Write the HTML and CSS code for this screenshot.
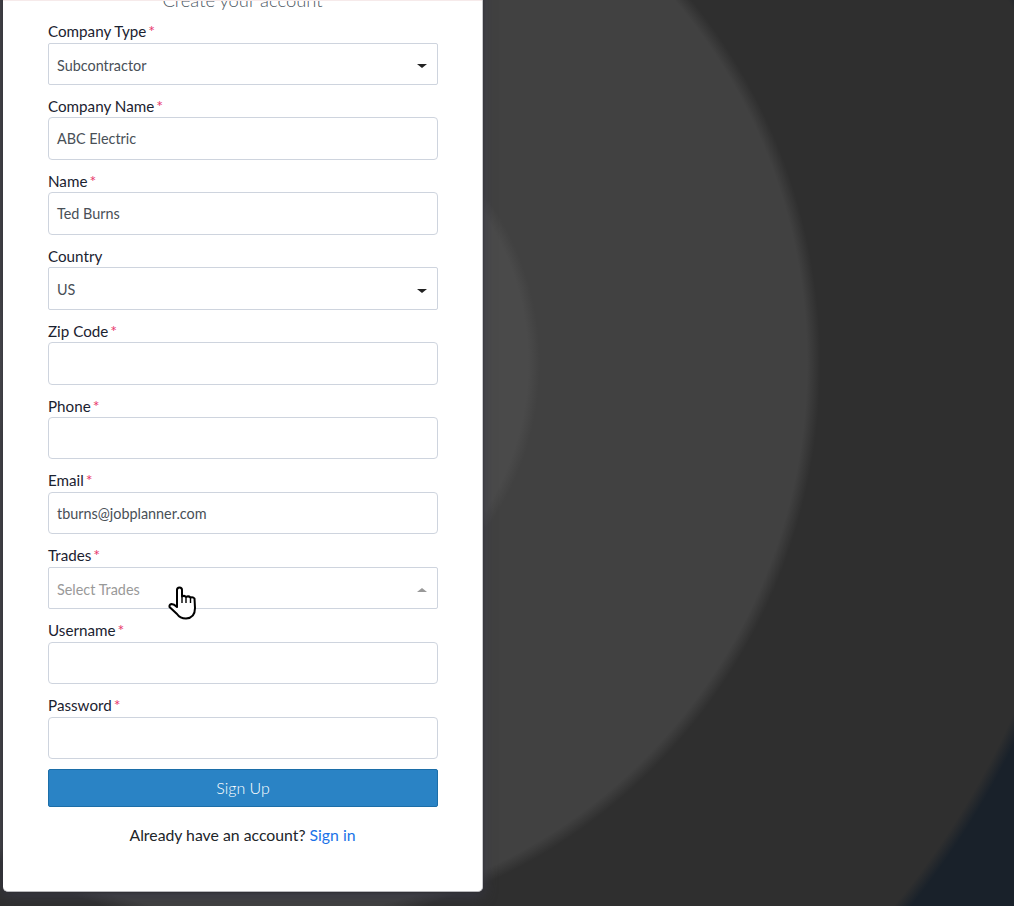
FILE: index.html
```html
<!DOCTYPE html>
<html lang="en">
<head>
<meta charset="utf-8">
<title>Create your account</title>
<link rel="stylesheet" href="styles.css">
</head>
<body>
<main class="card">
  <span class="card-edge"></span>
  <h1 class="title">Create your account</h1>
  <form class="form">
    <div class="field">
      <div class="label">Company Type<span class="req">*</span></div>
      <div class="control select"><span>Subcontractor</span><i class="caret"></i></div>
    </div>
    <div class="field">
      <div class="label">Company Name<span class="req">*</span></div>
      <div class="control">ABC Electric</div>
    </div>
    <div class="field">
      <div class="label">Name<span class="req">*</span></div>
      <div class="control">Ted Burns</div>
    </div>
    <div class="field">
      <div class="label">Country</div>
      <div class="control select"><span>US</span><i class="caret"></i></div>
    </div>
    <div class="field">
      <div class="label">Zip Code<span class="req">*</span></div>
      <div class="control"></div>
    </div>
    <div class="field">
      <div class="label">Phone<span class="req">*</span></div>
      <div class="control"></div>
    </div>
    <div class="field">
      <div class="label">Email<span class="req">*</span></div>
      <div class="control">tburns@jobplanner.com</div>
    </div>
    <div class="field">
      <div class="label">Trades<span class="req">*</span></div>
      <div class="control select placeholder"><span>Select Trades</span><i class="caret up"></i></div>
    </div>
    <div class="field">
      <div class="label">Username<span class="req">*</span></div>
      <div class="control"></div>
    </div>
    <div class="field">
      <div class="label">Password<span class="req">*</span></div>
      <div class="control"></div>
    </div>
    <button class="submit" type="button">Sign Up</button>
    <p class="signin">Already have an account? <a href="#">Sign in</a></p>
  </form>
</main>
<svg class="pointer" width="50" height="50" viewBox="0 0 50 50" aria-hidden="true">
  <path d="M17 31 L17 15 Q17 12.5 19.5 12.5 Q22 12.5 22 15 L22 21.5 Q24.5 20 26 22 Q28.5 20.5 30.5 22.5 Q33 21.5 34.5 23.5 L35 33 Q35 43 26 43.5 Q20 43.5 17 39 L9.5 32 Q9 29.5 11.5 29 Q14 29 17 32 Z" fill="#fff" stroke="#000" stroke-width="2" stroke-linejoin="round"/>
  <path d="M22 21.5 V28 M26 22 V28 M30.5 22.5 V28" fill="none" stroke="#000" stroke-width="1.4"/>
</svg>
</body>
</html>
```
FILE: styles.css
```css
* { box-sizing: border-box; }
html, body { height: 100%; }
body {
  margin: 0;
  overflow: hidden;
  font-family: Lato, "Open Sans", sans-serif;
  color: #212529;
  background: #19212a radial-gradient(ellipse 830px 848px at 265px 363px,
    #4a4a4a 0, #4a4a4a 31.7%, #414141 33.1%, #414141 65.3%,
    #2f2f2f 66.9%, #2f2f2f 99.2%, #19212a 100.8%);
}
.card {
  position: relative;
  width: 480px;
  height: 915px;
  margin: -23px 0 0 3px;
  padding: 12px 45px 0;
  background: #fff;
  border-radius: 5px;
  border-right: 1px solid #c8c8cc;
  border-bottom: 1px solid #b8b8bc;
  box-shadow: 0 1px 2px #2f2f33, 0 4px 14px rgba(58, 58, 72, .9);
}
.card-edge {
  position: absolute;
  left: 0;
  right: 0;
  top: 23px;
  height: 1px;
  background: #f6eaea;
}
.title {
  margin: 0;
  height: 22px;
  text-align: center;
  font-size: 18.4px;
  line-height: 22px;
  font-weight: 300;
  color: #4f5964;
}
.form { margin-top: 9.05px; }
.field { height: 74.9px; }
.label {
  height: 22.5px;
  font-size: 15.2px;
  line-height: 22.5px;
  color: #1b2230;
}
.req {
  margin-left: 2px;
  color: #e8386b;
  font-size: 16px;
}
.control {
  display: flex;
  align-items: center;
  justify-content: space-between;
  width: 390px;
  height: 42.4px;
  padding: 0 8px;
  border: 1px solid #ced4de;
  border-radius: 4px;
  font-size: 14.4px;
  color: #495057;
  background: #fff;
}
.select { border-radius: 2px; padding: 3px 10px 0 8px; }
.placeholder { color: #999; }
.caret {
  width: 0;
  height: 0;
  margin-top: 2px;
  border-left: 5px solid transparent;
  border-right: 5px solid transparent;
  border-top: 4px solid #222;
}
.caret.up {
  border-top: 0;
  border-bottom: 4px solid #999;
  margin-top: 2px;
}
.submit {
  display: block;
  width: 390px;
  height: 38px;
  margin: 0;
  border: 1px solid #1c6ea8;
  border-radius: 2px;
  background: #2a83c5;
  color: #fff;
  font-family: inherit;
  font-size: 16px;
  font-weight: 300;
}
.signin {
  margin: 18px 0 0;
  text-align: center;
  font-size: 15.8px;
  line-height: 20px;
  color: #212529;
}
.signin a { color: #1a73e8; text-decoration: none; }
.pointer {
  position: absolute;
  left: 160px;
  top: 575px;
}
```
